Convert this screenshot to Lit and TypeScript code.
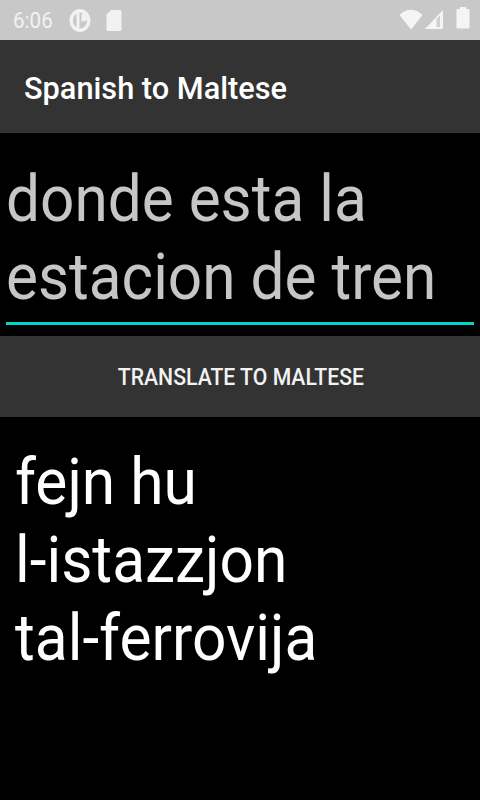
import { LitElement, html, css } from "lit";
import { customElement } from "lit/decorators.js";

@customElement("app-root")
export class AppRoot extends LitElement {
  static styles = css`
    :host {
      display: block;
      width: 480px;
      height: 800px;
      background: #000;
      font-family: Roboto, "Liberation Sans", sans-serif;
      overflow: hidden;
    }
    .status {
      height: 40px;
      background: #c8c8c8;
      display: flex;
      align-items: center;
      padding: 0 10px 0 13px;
      color: #f2f2f2;
      font-size: 20px;
      box-sizing: border-box;
    }
    .time { display: block; width: 56px; transform: scale(1.03, 1.08); transform-origin: left center; }
    .left { display: flex; align-items: center; }
    .sd { margin-left: 14px; }
    .right { margin-left: auto; display: flex; align-items: center; gap: 2px; }
    .batt { margin-left: 11px; }
    svg { display: block; }
    .bar {
      height: 93px;
      background: #333;
      display: flex;
      align-items: center;
      padding-left: 24px;
      padding-top: 3px;
      box-sizing: border-box;
      color: #fff;
      font-size: 32px;
      font-weight: 500;
    }
    .bar span { display: block; transform: scaleX(0.96); transform-origin: left center; }
    .input {
      padding: 29px 6px 0;
      height: 203px;
      box-sizing: border-box;
    }
    .input .txt {
      color: #c6c6c6;
      font-size: 60px;
      line-height: 78px;
      height: 156px;
      white-space: nowrap;
    }
    .ln { display: block; transform: scale(1.005, 1.09); transform-origin: left 59.5px; }
    .input .line { height: 3px; background: #00d4cb; margin-top: 4px; }
    .btn {
      height: 81px;
      background: #333;
      color: #f2f2f2;
      font-size: 21px;
      font-weight: 500;
      display: flex;
      align-items: center;
      justify-content: center;
      padding-left: 2px;
      box-sizing: border-box;
    }
    .btn span { display: block; transform: scale(1.01, 1.1); }
    .out {
      padding: 0 15px;
      color: #fff;
      font-size: 60px;
      line-height: 78px;
      margin-top: 28px;
    }
    .out .ln { transform: scale(1.008, 1.09); }
  `;
  render() {
    return html`
      <div class="status">
        <div class="left">
          <span class="time">6:06</span>
          <svg width="22" height="40" viewBox="0 0 22 40"><ellipse cx="11" cy="20.500" rx="8.800" ry="9.800" fill="none" stroke="#f2f2f2" stroke-width="3.500"/><path d="M7.500 13h3v15h-3zM12.500 13.500h1.500a4 4 0 0 1 0 8h-1.500z" fill="#f2f2f2"/></svg>
          <svg class="sd" width="18" height="40" viewBox="0 0 18 40"><path d="M6 10h9a1.500 1.500 0 0 1 1.500 1.500v18a1.500 1.500 0 0 1-1.500 1.500H3a1.500 1.500 0 0 1-1.500-1.500V14.500z" fill="#f2f2f2"/></svg>
        </div>
        <div class="right">
          <svg width="24" height="40" viewBox="0 0 24 40"><path d="M0.500 15C7 8 17 8 23.500 15L12 29.500z" fill="#f5f5f5"/></svg>
          <svg width="18" height="40" viewBox="0 0 18 40"><path d="M0 29L18 10V29z" fill="#f5f5f5"/><path d="M11.500 19L15 15.500V27H11.500z" fill="#cfcfcf"/></svg>
          <svg class="batt" width="14" height="40" viewBox="0 0 14 40"><path d="M4 7h6v2h2.500a1 1 0 0 1 1 1v17.500a1 1 0 0 1-1 1h-11a1 1 0 0 1-1-1V10a1 1 0 0 1 1-1H4z" fill="#f5f5f5"/></svg>
        </div>
      </div>
      <div class="bar"><span>Spanish to Maltese</span></div>
      <div class="input">
        <div class="txt"><span class="ln">donde esta la</span><span class="ln">estacion de tren</span></div>
        <div class="line"></div>
      </div>
      <div class="btn"><span>TRANSLATE TO MALTESE</span></div>
      <div class="out"><span class="ln">fejn hu</span><span class="ln">l-istazzjon</span><span class="ln">tal-ferrovija</span></div>
    `;
  }
}
